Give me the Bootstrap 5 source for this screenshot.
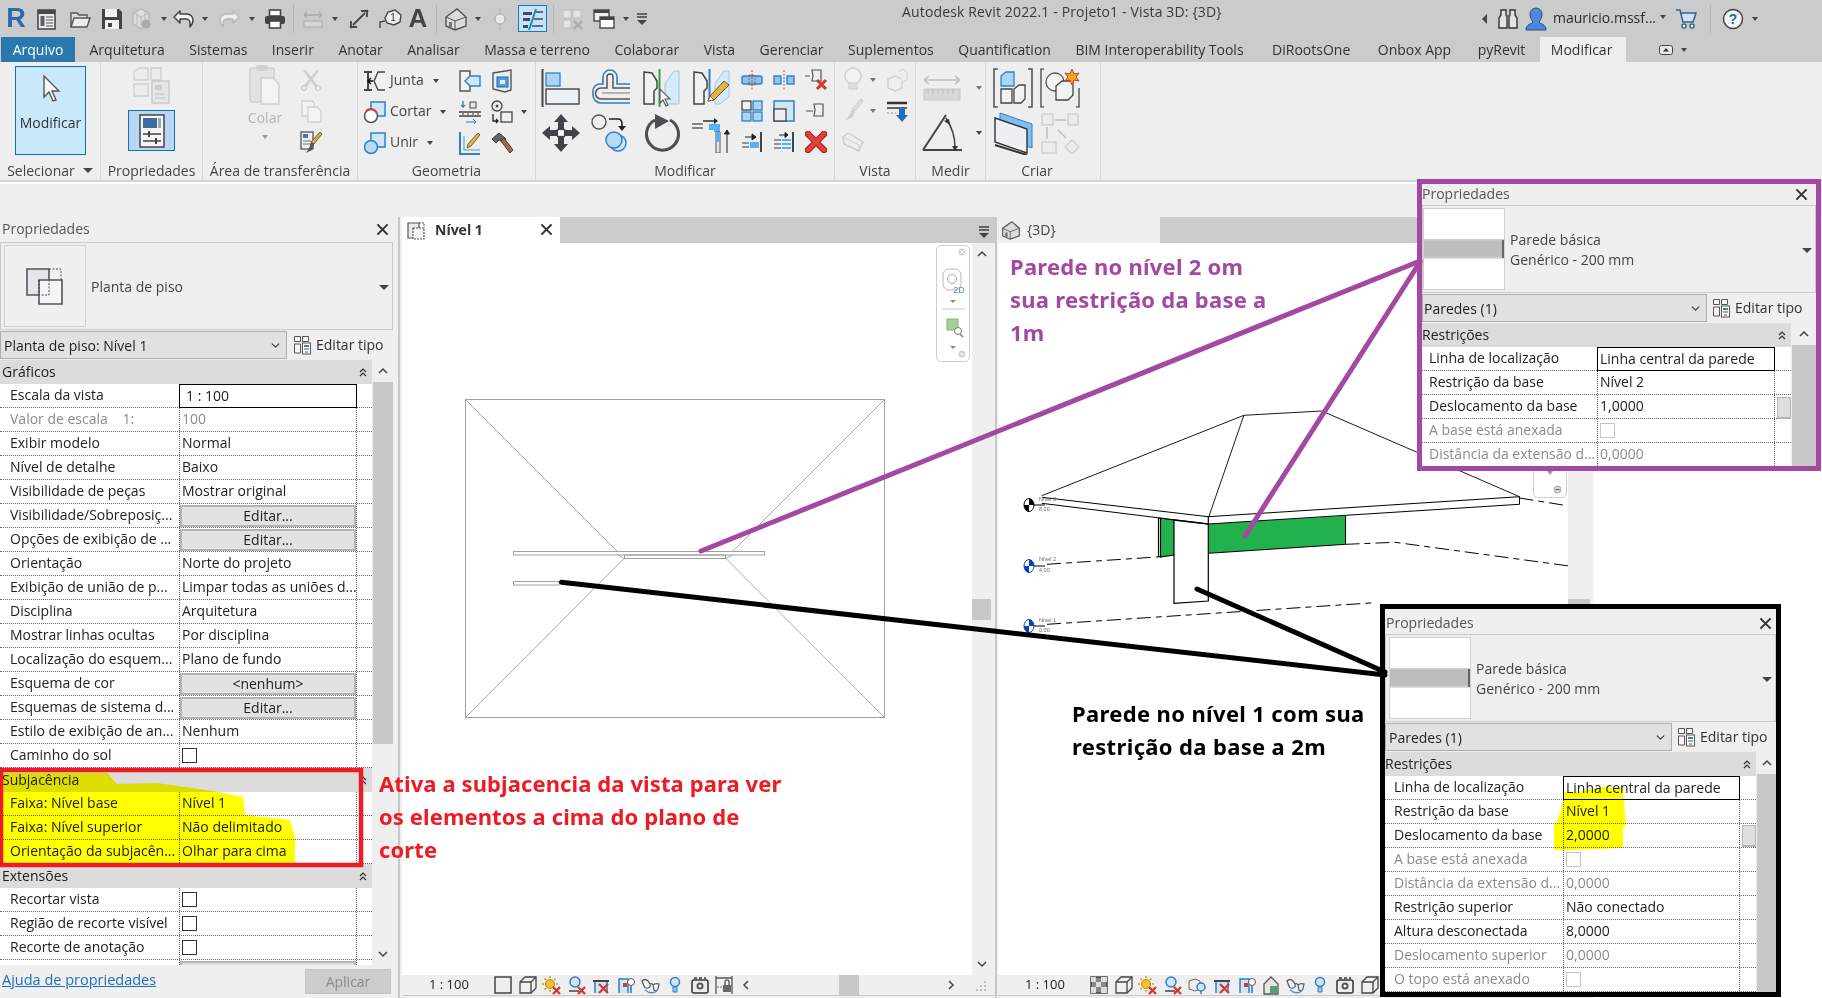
<!DOCTYPE html>
<html lang="pt-BR">
<head>
  <meta charset="UTF-8">
  <meta name="viewport" content="width=device-width, initial-scale=1.0">
  <title>Autodesk Revit 2022.1 - Projeto1 - Vista 3D: {3D}</title>
  <link href="https://cdn.jsdelivr.net/npm/bootstrap@5.3.0/dist/css/bootstrap.min.css" rel="stylesheet">
  <style>
    html, body { margin: 0; overflow: hidden; background: #fff; }
    body { font-family: "Open Sans", "Noto Sans", sans-serif; font-size: 14px; letter-spacing: 0; color: #2b2b2b; line-height: 1.2; }
    .app { width: 1822px; height: 998px; position: relative; overflow: hidden; background: #fff; }
    .sprites { position: absolute; width: 0; height: 0; }

    /* barra de titulo */
    .titlebar { height: 37px; background: #cbcbcb; gap: 6px; padding-left: 4px; }
    .logo-r { width: 24px; text-align: center; font: 700 27px "Liberation Sans", sans-serif; color: #2b6ca8; }
    .qa-a { width: 24px; text-align: center; font: 700 26px "Liberation Sans", sans-serif; color: #444; }
    .qa-sep { width: 1px; height: 28px; background: #b4b4b4; flex: none; }
    .qa-on { width: 29px; height: 27px; background: #c3e3f8; border: 1.5px solid #1b76cf; display: flex; align-items: center; justify-content: center; }
    .dd { display: inline-block; width: 0; height: 0; border-top: 4px solid #444; border-left: 3.5px solid transparent; border-right: 3.5px solid transparent; flex: none; }
    .dd-lg { border-top-width: 5px; border-left-width: 5px; border-right-width: 5px; }
    .dd-soft { border-top-color: #777; }
    .dd-faint { border-top-color: #999; }
    .dd-up { margin-top: -3px; }
    .dd-box { width: 8px; display: flex; justify-content: center; }
    .gp1 { margin-left: 1px; } .gp2 { margin-left: 2px; } .gp3 { margin-left: 3px; } .gp4 { margin-left: 4px; } .gp7 { margin-left: 7px; } .gp8 { margin-left: 8px; }
    .gn2 { margin-left: -2px; } .gn3 { margin-left: -3px; }
    .qa-title { margin-left: 248px; color: #3a3a3a; font-size: 14px; letter-spacing: .15px; margin-top: -12px; white-space: nowrap; }
    .qa-right { margin-left: auto; padding-right: 64px; gap: 4px; }
    .qa-name { white-space: nowrap; margin-left: 1px; }

    /* abas */
    .tabstrip { height: 25px; background: #cbcbcb; gap: 24.5px; padding-left: 1px; flex-wrap: nowrap; }
    .tabstrip .nav-link { padding: 0; color: #333; line-height: 25px; white-space: nowrap; }
    .tabstrip .tab-file { background: #2a79ae; color: #fff; width: 74px; text-align: center; margin-right: -10px; }
    .tabstrip .tab-on { background: #eee; padding: 0 11px; margin: 0 9px 0 -10px; width: 86px; }

    /* faixa de opcoes */
    .ribbon { height: 120px; background: #eee; border-bottom: 2px solid #d4d4d4; }
    .rb-panel { height: 118px; border-right: 1px solid #d9d9d9; flex: none; display: flex; flex-direction: column; }
    .rb-body { height: 98px; flex: none; position: relative; }
    .rb-label { text-align: center; color: #444; line-height: 21px; white-space: nowrap; }
    .rb-label-make { padding-right: 12px; }
    .rb-select { width: 101px; } .rb-props { width: 102px; } .rb-clip { width: 155px; } .rb-geo { width: 178px; }
    .rb-mod { width: 299px; } .rb-view { width: 81px; } .rb-meas { width: 70px; } .rb-make { width: 115px; }
    .mod-btn { width: 71px; height: 89px; margin: 4px 0 0 15px; background: #c9e8f9; border: 1.5px solid #0f6fc6; color: #333; padding-top: 8px; text-align: center; }
    .mod-btn svg { margin-bottom: 12px; }
    .prop-btn { width: 47px; height: 41px; background: #b9d6f2; border: 1.5px solid #0f6fc6; display: flex; align-items: center; justify-content: center; }
    .ic-cell { display: flex; align-items: center; justify-content: center; min-width: 0; }
    .clip-grid { display: grid; grid-template-columns: 60px 32px; grid-template-rows: repeat(3, 31px); margin: 2px 0 0 32px; }
    .clip-big { grid-row: 1 / 4; display: flex; flex-direction: column; align-items: center; color: #b4b4b4; }
    .clip-big span { margin-top: 4px; }
    .geo-grid { display: grid; grid-template-columns: 96px 32px 32px 12px; grid-template-rows: repeat(3, 31px); margin-top: 3px; }
    .geo-item { display: flex; align-items: center; gap: 3px; padding-left: 5px; color: #444; }
    .geo-item .dd { margin-left: 6px; }
    .mod-flex { display: flex; margin-top: 3px; }
    .mod-big { display: grid; grid-template-columns: repeat(4, 50px); grid-template-rows: repeat(2, 45px); }
    .mod-small { display: grid; grid-template-columns: repeat(3, 32px); grid-template-rows: repeat(3, 31px); margin-top: -1px; }
    .view-grid { display: grid; grid-template-columns: 3px 30px 10px 38px; grid-template-rows: repeat(3, 31px); margin-top: 2px; }
    .meas-grid { display: grid; grid-template-columns: 6px 40px 26px; grid-template-rows: repeat(2, 45px); margin-top: 3px; }
    .make-grid { display: grid; grid-template-columns: 3px 47px 47px; grid-template-rows: repeat(2, 45px); margin-top: 3px; }

    .workarea { height: 781px; display: flex; margin-top: 35px; background: #efefef; width: 1593px; position: relative; }
    .gapfill { position: absolute; left: 0; top: 184px; width: 1822px; height: 33px; background: #efefef; }

    /* painel de propriedades */
    .ppanel { display: flex; flex-direction: column; flex: none; background: #efefef; --c1: 179px; --c2: 178px; --t: 372px; width: 393px; height: 781px; overflow: hidden; }
    .ptitle { height: 25px; flex: none; display: flex; align-items: center; justify-content: space-between; color: #555; padding: 0 4px 0 2px; }
    .ptype { height: 88px; flex: none; border: 1px solid #cbcbcb; display: flex; align-items: center; padding-left: 3px; position: relative; color: #444; }
    .ptype-tx { margin-top: 3px; }
    .ptype-tx span { display: block; margin-top: 3px; }
    .pthumb { width: 82px; height: 82px; flex: none; border: 1px solid #d0d0d0; margin-right: 5px; background: #f0f0f0; display: flex; align-items: center; justify-content: center; }
    .pthumb-wall { background: linear-gradient(#666, #666) right 0 top 31px / 2px 18px no-repeat, linear-gradient(#fff 37%, #dcdcdc 37%, #bdbdbd 40%, #bdbdbd 59%, #dcdcdc 62%, #fff 62%); }
    .ptype .dd { position: absolute; right: 3px; top: 42px; }
    .pselect-row { height: 30px; flex: none; display: flex; align-items: center; }
    .pselect-row .form-select { width: 287px; height: 28px; padding: 0 20px 0 3px; border-radius: 0; border-color: #adadad; background-color: #e1e1e1; color: #222; font-size: 14px; background-size: 11px 9px; background-position: right 5px center; }
    .edit-type { display: flex; align-items: center; gap: 3px; margin-left: 6px; white-space: nowrap; color: #333; }
    .pgrid { flex: 1 1 auto; min-height: 0; display: flex; position: relative; overflow: hidden; }
    .ptable { width: var(--t); flex: none; background: #fff; }
    .pgroup { height: 24px; background: #dcdcdc; padding-left: 2px; display: flex; align-items: center; justify-content: space-between; padding-right: 5px; color: #222; }
    .prow { height: 24px; display: grid; grid-template-columns: var(--c1) var(--c2) 1fr; border-bottom: 1px dotted #666; color: #222; align-items: stretch; white-space: nowrap; }
    .prow > span { display: flex; align-items: center; overflow: hidden; }
    .prow > .pl { padding-left: 10px; }
    .prow > .pv { padding-left: 2px; border-left: 1px dotted #666; border-right: 1px dotted #666; }
    .prow.off { color: #8b8b8b; }
    .prow > .pv-input { border: 1.5px solid #000; background: #fff; margin-bottom: -1px; padding-left: 2px; }
    .prow > .pv-input.tx { padding-left: 6px; }
    .pv-btn { background: #e1e1e1; border: 2px solid #b2b2b2; flex: 1; text-align: center; line-height: 18px; margin: 1px 0 1px -2px; font-weight: 400; min-height: 22px; }
    .ck { width: 15px; height: 15px; border: 1px solid #333; background: #fff; }
    .off .ck { border-color: #c4c4c4; }
    .pscroll { flex: 1; margin-left: 1px; position: relative; background: #efefef; }
    .pscroll-track { position: absolute; left: 0; right: 0; top: 22px; background: #c8c8c8; }
    .trk-main { height: 362px; } .trk-p { height: 140px; } .trk-b { height: 220px; }
    .pscroll svg { position: absolute; left: 50%; margin-left: -6px; }
    .chev-t { top: 5px; } .chev-b { bottom: 5px; }
    .minithumb { position: absolute; width: 14px; height: 22px; background: #dedede; border: 1px solid #b5b5b5; border-bottom-width: 2px; }
    .mini-p { left: 355px; top: 74px; } .mini-b { left: 357px; top: 73px; }
    .pfoot { height: 33px; flex: none; display: flex; align-items: center; justify-content: space-between; padding: 0 2px; background: #efefef; }
    .pfoot a { color: #1a6fbf; font-size: 14.5px; margin-bottom: 4px; }
    .pfoot .btn { width: 86px; height: 25px; padding: 0; border-radius: 0; background: #ccc; border: 1px solid #c2c2c2; color: #8a8a8a; font-size: 14px; opacity: 1; }

    .float-props { position: absolute; z-index: 4; background: #efefef; }
    .float-purple { left: 1417px; top: 179px; width: 404px; height: 292px; border: 5px solid #a349a4; }
    .float-black { left: 1380px; top: 604px; width: 401px; height: 393px; border: 5px solid #000; }
    .float-props .ppanel { width: 100%; height: 100%; }
    .float-purple .ppanel { --c1: 175px; --c2: 178px; --t: 369px; }
    .float-purple .ptitle { height: 21px; padding: 0 8px 0 0; }
    .float-purple .ptype { padding-left: 0; }
    .float-purple .pselect-row .form-select { width: 285px; padding-left: 1px; }
    .float-purple .prow > .pl { padding-left: 7px; }
    .float-black .ppanel { --c1: 178px; --c2: 177px; --t: 371px; }
    .float-black .ptitle { padding: 3px 4px 0 1px; }
    .float-black .prow > .pl { padding-left: 9px; }
    .float-props .pgroup { padding-left: 0; }
    .float-props .edit-type { margin-left: 5px; }

    /* vistas */
    .vsplit { width: 7px; flex: none; position: relative; }
    .vsplit::after { content: ""; position: absolute; left: 5px; top: 0; bottom: 0; width: 2px; background: #c8c8c8; }
    .vsplit-b { width: 3px; }
    .vsplit-b::after { left: 0; }
    .vpane { display: flex; flex-direction: column; flex: none; }
    .vpane-a { width: 593px; margin-left: 2px; }
    .vpane-b { width: 595px; }
    .vtabs { height: 26px; background: #cbcbcb; display: flex; flex: none; align-items: stretch; position: relative; }
    .vtab { width: 158px; background: #fff; display: flex; align-items: center; font-weight: 700; color: #333; padding-left: 4px; gap: 9px; position: relative; }
    .vtab-close { position: absolute; right: 7px; top: 6px; }
    .vtab-off { background: #efefef; font-weight: 400; color: #444; width: 162px; padding-left: 3px; gap: 6px; }
    .vtabs-more { position: absolute; right: 5px; top: 8px; }
    .vbody { height: 732px; flex: none; display: flex; position: relative; }
    .vcanvas { width: 570px; background: #fff; flex: none; display: block; }
    .vscroll { width: 19px; background: #efefef; flex: none; position: relative; }
    .vscroll-wide { width: 22px; }
    .vscroll i { position: absolute; left: 0; right: 0; top: 356px; height: 21px; background: #c8c8c8; }
    .vscroll svg { position: absolute; left: 4px; }
    .vbar { height: 20px; display: flex; align-items: center; flex: none; background: #efefef; }
    .vbar-scale { width: 91px; padding-left: 27px; font-size: 13px; flex: none; color: #222; }
    .vbar-icons { display: flex; gap: 4.6px; flex: none; }
    .vbar-track { position: relative; flex: 1; height: 20px; margin-left: 6px; }
    .vbar-track i { position: absolute; left: 99px; width: 20px; top: 0; bottom: 0; background: #c8c8c8; }
    .vbar-track svg { position: absolute; top: 4px; }
    .trk-l { left: 0; } .trk-r { left: 205px; }
    .vbar-line { height: 3px; border-top: 1.5px solid #c8c8c8; background: #efefef; flex: none; }
    .wheel { position: absolute; left: 534px; top: 2px; width: 34px; height: 117px; border: 1.5px solid #cfcfcf; border-radius: 5px; background: #fff; display: flex; flex-direction: column; align-items: center; }
    .wheel-b { left: 535px; top: 138px; height: 117px; justify-content: flex-end; padding-bottom: 3px; gap: 10px; }

    /* anotacoes */
    .overlay, .hl-layer { position: absolute; left: 0; top: 0; width: 1822px; height: 998px; pointer-events: none; }
    .hl-layer { z-index: 5; mix-blend-mode: multiply; }
    .overlay { z-index: 6; }
    .note { position: absolute; z-index: 7; font-family: "Noto Sans", "Open Sans", sans-serif; font-weight: 700; font-size: 22px; line-height: 33px; margin: 0; white-space: nowrap; }
    .note-red { left: 379px; top: 767px; color: #ed1c24; letter-spacing: .1px; }
    .note-purple { left: 1010px; top: 250px; color: #a349a4; letter-spacing: .25px; }
    .note-black { left: 1072px; top: 697px; color: #000; letter-spacing: .35px; }
  </style>
</head>
<body>
<div class="app">

  <!-- icones reutilizados -->
  <svg class="sprites" aria-hidden="true">
    <symbol id="q-list" viewBox="0 0 24 24"><rect x="4" y="3" width="17" height="19" fill="#e9eaeb" stroke="#4a4a4a" stroke-width="1.6"/><rect x="4" y="3" width="17" height="4" fill="#4a4a4a"/><rect x="6.5" y="9" width="4" height="10" fill="#5a6066"/><path d="M12 10h7M12 13h7M12 16h7M12 19h7" stroke="#555"/></symbol>
    <symbol id="q-open" viewBox="0 0 24 24"><path d="M3 20V6h6l2 2h8v3" fill="#ddd" stroke="#555" stroke-width="1.4"/><path d="M3 20l3-9h16l-3 9z" fill="#ececec" stroke="#555" stroke-width="1.4"/></symbol>
    <symbol id="q-save" viewBox="0 0 24 24"><path d="M2 2h17l3 3v17H2z" fill="#444"/><rect x="5" y="2" width="12" height="8" fill="#f2f2f2"/><rect x="5" y="13" width="14" height="9" fill="#f2f2f2"/><rect x="8" y="16" width="4" height="4" fill="#444"/></symbol>
    <symbol id="q-cube" viewBox="0 0 24 24"><path d="M11 2l8 4v11l-8 5-8-5V6z" fill="#ddd" stroke="#b5b5b5" stroke-width="1.3"/><path d="M3 6l8 4 8-4M11 10v12M7 4v14M15 4v14" stroke="#bbb" fill="none"/><circle cx="16" cy="17" r="4.500" fill="#aaa"/></symbol>
    <symbol id="q-undo" viewBox="0 0 24 24"><path d="M9 4L3 10l6 6V12h6a4 4 0 0 1 4 4v4q3-3 3-7a6 6 0 0 0-6-6H9z" fill="#f4f4f4" stroke="#444" stroke-width="1.5" stroke-linejoin="round"/></symbol>
    <symbol id="q-redo" viewBox="0 0 24 24"><path d="M15 4l6 6-6 6V12H9a4 4 0 0 0-4 4v4q-3-3-3-7a6 6 0 0 1 6-6h7z" fill="#eee" stroke="#b9b9b9" stroke-width="1.5" stroke-linejoin="round"/></symbol>
    <symbol id="q-print" viewBox="0 0 24 24"><rect x="6.5" y="3" width="11" height="6" fill="#fff" stroke="#444" stroke-width="1.6"/><rect x="2" y="9" width="20" height="8" rx="2" fill="#444"/><rect x="6.5" y="14" width="11" height="7" fill="#fff" stroke="#444" stroke-width="1.6"/></symbol>
    <symbol id="q-meas" viewBox="0 0 24 24"><path d="M3 8h18M3 8l3-3M3 8l3 3M21 8l-3-3M21 8l-3 3" stroke="#aaa" stroke-width="1.4" fill="none"/><rect x="3" y="14" width="18" height="6" fill="#d5d5d5" stroke="#aaa"/></symbol>
    <symbol id="q-dim" viewBox="0 0 24 24"><path d="M6 18L18 6M14 4h6v6M4 14v6h6" stroke="#444" stroke-width="1.8" fill="none"/><path d="M3 19l2 2M19 3l2 2" stroke="#444" stroke-width="2"/></symbol>
    <symbol id="q-house" viewBox="0 0 24 24"><path d="M2 10L13 2l9 8v9l-11 4-9-4z" fill="#dcdcdc" stroke="#555" stroke-width="1.4"/><path d="M2 10l9 4 11-4M11 14v9" stroke="#555" fill="none"/><rect x="5" y="15" width="3" height="5" fill="#777"/></symbol>
    <symbol id="q-circ" viewBox="0 0 24 24"><path d="M12 1v4M12 19v4" stroke="#bbb" stroke-width="1.5"/><path d="M12 5l7 7-7 7-7-7z" fill="#bbb"/><circle cx="12" cy="12" r="5" fill="#eaeaea" stroke="#aaa"/></symbol>
    <symbol id="q-thin" viewBox="0 0 24 24"><path d="M2 5h9v3H2zM2 11h7v3H2zM2 18h5v3H2z" fill="#3f4a55"/><path d="M15 5h7M13 12h9M11 19h11" stroke="#3f4a55" stroke-width="1.4"/><path d="M15 2L8 23" stroke="#1b76cf" stroke-width="1.8"/></symbol>
    <symbol id="q-sw" viewBox="0 0 24 24"><path d="M3 3h8v8H3zM13 3h8v8h-8zM3 13h8v8H3z" fill="#e4e4e4" stroke="#bbb"/><path d="M14 14l8 8M22 14l-8 8" stroke="#aaa" stroke-width="2.400"/></symbol>
    <symbol id="q-win" viewBox="0 0 24 24"><rect x="2" y="3" width="15" height="11" fill="#eee" stroke="#444" stroke-width="1.4"/><rect x="2" y="3" width="15" height="3" fill="#444"/><rect x="8" y="10" width="14" height="11" fill="#fff" stroke="#444" stroke-width="1.4"/><rect x="8" y="10" width="14" height="3" fill="#444"/></symbol>
    <symbol id="edit-ty" viewBox="0 0 20 20"><path d="M1.500 1.500h6v5h-6zM9.500 1.500h6v5h-6zM1.500 9h6v9h-6z" fill="#f6f6f6" stroke="#555"/><rect x="9.500" y="8" width="8" height="11" fill="#fff" stroke="#555"/><path d="M11 10h5v2h-5z" fill="#2f7fc9"/><path d="M11 14h5M12 17h3" stroke="#555"/></symbol>
    <symbol id="x-close" viewBox="0 0 14 14"><path d="M1.500 1.500l11 11M12.500 1.500l-11 11" stroke="#333" stroke-width="2.200"/></symbol>
    <symbol id="chev-up" viewBox="0 0 12 12"><path d="M2 8l4-4 4 4" fill="none" stroke="#444" stroke-width="1.500"/></symbol>
    <symbol id="chev-dn" viewBox="0 0 12 12"><path d="M2 4l4 4 4-4" fill="none" stroke="#444" stroke-width="1.500"/></symbol>
    <symbol id="dbl-up" viewBox="0 0 8 10"><path d="M1 5l3-3 3 3M1 9l3-3 3 3" fill="none" stroke="#333" stroke-width="1.200"/></symbol>
    <symbol id="more" viewBox="0 0 12 14"><path d="M1 2h10M1 5h10" stroke="#444" stroke-width="1.500"/><path d="M1 8h10l-5 5z" fill="#444"/></symbol>

    <!-- barra de controle da vista -->
    <symbol id="v-rect" viewBox="0 0 20 20"><rect x="2" y="2" width="16" height="16" fill="#eee" stroke="#444" stroke-width="1.500"/></symbol>
    <symbol id="v-chk" viewBox="0 0 20 20"><rect x="2" y="2" width="16" height="16" fill="#888" stroke="#444" stroke-width="1.500"/><path d="M2 2h5v5H2zM12 2h6v5h-6zM7 7h5v5H7zM2 12h5v6H2zM12 12h6v6h-6z" fill="#ddd"/></symbol>
    <symbol id="v-cube" viewBox="0 0 20 20"><path d="M2 7l5-5h11v11l-5 5H2z" fill="#f1f1f1" stroke="#444" stroke-width="1.300"/><path d="M2 7h11v11M13 7l5-5" fill="none" stroke="#444" stroke-width="1.300"/></symbol>
    <symbol id="v-sun" viewBox="0 0 20 20"><circle cx="8" cy="9" r="4.500" fill="#f2c230" stroke="#b88b10"/><path d="M8 1v2M8 15v2M0 9h2M14 9h2M2.500 3.500l1.500 1.500M13.500 3.500L12 5M2.500 14.500L4 13" stroke="#c99d1a" stroke-width="1.400"/><path d="M11 12l7 7M18 12l-7 7" stroke="#d5392c" stroke-width="2.400"/></symbol>
    <symbol id="v-look" viewBox="0 0 20 20"><circle cx="8" cy="7" r="5" fill="#cfe6f7" stroke="#2f7fc9" stroke-width="1.500"/><path d="M2 16h10" stroke="#444" stroke-width="1.500"/><path d="M11 12l7 7M18 12l-7 7" stroke="#d5392c" stroke-width="2.400"/></symbol>
    <symbol id="v-crop" viewBox="0 0 20 20"><path d="M4 18V6h12v12" fill="#cfe6f7" stroke="#2f7fc9" stroke-width="1.500"/><path d="M2 6h16" stroke="#444" stroke-width="2"/><path d="M8 9l9 9M17 9l-9 9" stroke="#d5392c" stroke-width="2.200"/></symbol>
    <symbol id="v-cropl" viewBox="0 0 20 20"><path d="M3 18V4h9v14" fill="#cfe6f7" stroke="#2f7fc9" stroke-width="1.500"/><path d="M7 8h4v4H7z" fill="#d5392c"/><circle cx="15" cy="7" r="3.500" fill="#fff" stroke="#555"/><path d="M14 11v7h2v-7" fill="#4b94d4"/></symbol>
    <symbol id="v-glass" viewBox="0 0 20 20"><path d="M1 6q3-3 6 0l2 3q1 3-2 4t-4-2zM9 9q2-1 3 1" fill="#eef3f7" stroke="#555" stroke-width="1.200"/><path d="M12 10q2-2 6-1l-1 5q-2 3-4 1z" fill="#eef3f7" stroke="#555" stroke-width="1.200"/><path d="M4 15q6 5 12 1" fill="none" stroke="#4b94d4" stroke-width="1.500"/></symbol>
    <symbol id="v-bulb" viewBox="0 0 20 20"><circle cx="10" cy="7" r="4.500" fill="#cfe6f7" stroke="#2f7fc9" stroke-width="1.500"/><path d="M8 12h4v5H8z" fill="#9cc6e8" stroke="#2f7fc9"/></symbol>
    <symbol id="v-cam" viewBox="0 0 20 20"><rect x="2" y="5" width="16" height="13" rx="2" fill="#eee" stroke="#333" stroke-width="1.500"/><path d="M4 3h3M9 3h3M14 3h2" stroke="#333" stroke-width="1.500"/><circle cx="10" cy="11" r="3.500" fill="#555"/><circle cx="10" cy="11" r="1.500" fill="#fff"/></symbol>
    <symbol id="v-lock" viewBox="0 0 20 20"><path d="M2 1v18M18 1v18M2 3h16" stroke="#555" fill="none" stroke-width="1.300"/><path d="M3 12h5" stroke="#777" stroke-dasharray="2 1"/><rect x="9" y="10" width="8" height="7" fill="#666"/><path d="M11 10V7a2 2 0 0 1 4 0v3" fill="none" stroke="#666" stroke-width="1.500"/></symbol>
    <symbol id="v-hood" viewBox="0 0 20 20"><path d="M3 9l7-7 7 7v10H3z" fill="#e6e6e6" stroke="#555" stroke-width="1.300"/><rect x="9" y="11" width="8" height="7" fill="#54a07a"/></symbol>
    <symbol id="v-teapot" viewBox="0 0 20 20"><path d="M2 6l6-2 5 2v8l-5 2-6-2z" fill="#eee" stroke="#666"/><circle cx="14" cy="12" r="4" fill="#cfe6f7" stroke="#2f7fc9" stroke-width="1.500"/><path d="M14 16v3" stroke="#2f7fc9" stroke-width="1.500"/></symbol>
  </svg>

  <!-- barra de titulo -->
  <div class="titlebar d-flex align-items-center">
    <span class="logo-r">R</span>
    <svg width="24" height="24"><use href="#q-list"/></svg>
    <svg width="24" height="24" class="gp4"><use href="#q-open"/></svg>
    <svg width="24" height="24" class="gp2"><use href="#q-save"/></svg>
    <svg width="24" height="24"><use href="#q-cube"/></svg>
    <span class="dd-box"><i class="dd"></i></span>
    <svg width="24" height="24" class="gn3"><use href="#q-undo"/></svg>
    <span class="dd-box"><i class="dd"></i></span>
    <svg width="24" height="24" class="gp3"><use href="#q-redo"/></svg>
    <span class="dd-box"><i class="dd"></i></span>
    <svg width="24" height="24" class="gp1"><use href="#q-print"/></svg>
    <span class="qa-sep"></span>
    <svg width="24" height="24" class="gp1"><use href="#q-meas"/></svg>
    <span class="dd-box"><i class="dd"></i></span>
    <svg width="24" height="24" class="gp2"><use href="#q-dim"/></svg>
    <svg width="24" height="24" viewBox="0 0 24 24" class="gp1"><path d="M2 21v-6l5-1" stroke="#444" stroke-width="1.400" fill="none"/><path d="M7 11l3-6 7-2 6 5-1 7-6 3-7-2z" fill="#eee" stroke="#444" stroke-width="1.400"/><text x="15" y="14" font-size="10" text-anchor="middle" fill="#333" font-family="Liberation Sans">1</text></svg>
    <span class="qa-a gn2">A</span>
    <span class="qa-sep"></span>
    <svg width="24" height="24" class="gp1"><use href="#q-house"/></svg>
    <span class="dd-box"><i class="dd"></i></span>
    <svg width="24" height="24"><use href="#q-circ"/></svg>
    <span class="qa-on"><svg width="24" height="24"><use href="#q-thin"/></svg></span>
    <span class="qa-sep"></span>
    <svg width="24" height="24"><use href="#q-sw"/></svg>
    <svg width="24" height="24" class="gp2"><use href="#q-win"/></svg>
    <span class="dd-box"><i class="dd"></i></span>
    <svg width="12" height="14"><use href="#more"/></svg>
    <span class="qa-title">Autodesk Revit 2022.1 - Projeto1 - Vista 3D: {3D}</span>
    <div class="qa-right d-flex align-items-center">
      <svg width="6" height="10" viewBox="0 0 6 10"><path d="M5 0v10L0 5z" fill="#444"/></svg>
      <svg width="24" height="24" viewBox="0 0 24 24" class="gp4"><path d="M5 3h5v5l1 3v10H3V11l2-3zM14 3h5v5l2 3v10h-8V11l1-3z" fill="#e4e4e4" stroke="#333" stroke-width="1.400"/><path d="M10 8h4v6h-4z" fill="#666"/></svg>
      <svg width="24" height="24" viewBox="0 0 24 24"><path d="M2 23c0-6 6-6 7-8-2-2-3-5-3-8a6 6 0 0 1 12 0c0 3-1 6-3 8 1 2 7 2 7 8z" fill="#4f86d6" stroke="#23508f"/></svg>
      <span class="qa-name">mauricio.mssf...</span>
      <i class="dd dd-up"></i>
      <svg width="24" height="24" viewBox="0 0 24 24" class="gp4"><path d="M2 3h4l3 12h10l3-9H7" fill="#cfe3f5" stroke="#345f8e" stroke-width="1.500"/><circle cx="10" cy="19" r="2" fill="#fff" stroke="#345f8e" stroke-width="1.400"/><circle cx="18" cy="19" r="2" fill="#fff" stroke="#345f8e" stroke-width="1.400"/></svg>
      <span class="qa-sep gp8"></span>
      <svg width="22" height="22" viewBox="0 0 22 22" class="gp7"><circle cx="11" cy="11" r="9.500" fill="#f4f4f4" stroke="#444" stroke-width="1.500"/><text x="11" y="16" text-anchor="middle" font-size="14" font-weight="700" fill="#1f5fb5" font-family="Liberation Sans">?</text></svg>
      <i class="dd gp4"></i>
    </div>
  </div>

  <!-- abas -->
  <nav class="nav tabstrip">
    <a class="nav-link tab-file" href="#">Arquivo</a>
    <a class="nav-link" href="#">Arquitetura</a>
    <a class="nav-link" href="#">Sistemas</a>
    <a class="nav-link" href="#">Inserir</a>
    <a class="nav-link" href="#">Anotar</a>
    <a class="nav-link" href="#">Analisar</a>
    <a class="nav-link" href="#">Massa e terreno</a>
    <a class="nav-link" href="#">Colaborar</a>
    <a class="nav-link" href="#">Vista</a>
    <a class="nav-link" href="#">Gerenciar</a>
    <a class="nav-link" href="#">Suplementos</a>
    <a class="nav-link" href="#">Quantification</a>
    <a class="nav-link" href="#">BIM Interoperability Tools</a>
    <a class="nav-link gp4" href="#">DiRootsOne</a>
    <a class="nav-link gp3" href="#">Onbox App</a>
    <a class="nav-link gp2" href="#">pyRevit</a>
    <a class="nav-link tab-on" href="#">Modificar</a>
    <span class="d-flex align-items-center gap-2">
      <svg width="14" height="10" viewBox="0 0 14 10"><rect x=".5" y=".5" width="13" height="9" rx="2" fill="#e8e8e8" stroke="#444"/><path d="M4 6.500h6L7 3z" fill="#333"/></svg>
      <i class="dd"></i>
    </span>
  </nav>

  <!-- faixa de opcoes -->
  <div class="ribbon d-flex">
    <section class="rb-panel rb-select">
      <div class="rb-body">
        <div class="mod-btn">
          <svg width="26" height="28" viewBox="0 0 26 28" class="d-block mx-auto"><path d="M6 1v21l5-5 4 9 3-1-4-9h7z" fill="#f6f6f6" stroke="#555" stroke-width="1.400"/></svg>
          Modificar
        </div>
      </div>
      <div class="rb-label d-flex align-items-center justify-content-center gap-2">Selecionar <i class="dd dd-lg"></i></div>
    </section>

    <section class="rb-panel rb-props">
      <div class="rb-body d-flex flex-column align-items-center">
        <svg width="42" height="40" viewBox="0 0 42 40" class="mt-1 mb-1"><path d="M3 5l6-3h8v12H3zM3 18h14v12H3zM20 2h10v12H20z" fill="#ececec" stroke="#cecece" stroke-width="1.300"/><rect x="21" y="15" width="17" height="22" fill="#e6e6e6" stroke="#c6c6c6" stroke-width="1.300"/><rect x="24" y="19" width="7" height="5" fill="#cfcfcf"/><path d="M24 28h10M24 32h10" stroke="#cdcdcd" stroke-width="1.300"/></svg>
        <div class="prop-btn">
          <svg width="26" height="34" viewBox="0 0 26 34"><rect x="1" y="1" width="24" height="32" fill="#f4f6f8" stroke="#444" stroke-width="1.500"/><rect x="4" y="4" width="14" height="10" fill="#3d6ca3"/><rect x="19" y="4" width="3" height="10" fill="#9fa9b3"/><path d="M4 20h18M4 27h18" stroke="#444" stroke-width="1.500"/><path d="M10 17v6M17 24v6" stroke="#444" stroke-width="2"/></svg>
        </div>
      </div>
      <div class="rb-label">Propriedades</div>
    </section>

    <section class="rb-panel rb-clip">
      <div class="rb-body">
        <div class="clip-grid">
          <div class="clip-big">
            <svg width="34" height="42" viewBox="0 0 34 42"><rect x="2" y="4" width="24" height="34" rx="2" fill="#e3e3e3" stroke="#cfcfcf" stroke-width="1.500"/><rect x="8" y="1" width="12" height="6" rx="2" fill="#d2d2d2"/><path d="M13 14h12l6 6v20H13z" fill="#f3f3f3" stroke="#cfcfcf" stroke-width="1.500"/></svg>
            <span>Colar</span>
            <i class="dd mt-2 dd-faint"></i>
          </div>
          <span class="ic-cell"><svg width="22" height="24" viewBox="0 0 22 24"><path d="M4 2l14 18M18 2L4 20" stroke="#cfcfcf" stroke-width="2.600"/><circle cx="4" cy="20" r="2.500" fill="#eee" stroke="#c6c6c6"/><circle cx="18" cy="20" r="2.500" fill="#eee" stroke="#c6c6c6"/></svg></span>
          <span class="ic-cell"><svg width="22" height="24" viewBox="0 0 22 24"><path d="M2 2h10l2 2v13H2z" fill="#f3f3f3" stroke="#d0d0d0" stroke-width="1.300"/><path d="M8 8h9l4 4v11H8z" fill="#f3f3f3" stroke="#d0d0d0" stroke-width="1.300"/></svg></span>
          <span class="ic-cell"><svg width="24" height="24" viewBox="0 0 24 24"><rect x="2" y="2" width="12" height="17" fill="#eef1f4" stroke="#555" stroke-width="1.300"/><rect x="4" y="4" width="5" height="4" fill="#4a78ad"/><path d="M4 11h8M4 14h8" stroke="#777"/><path d="M21 2l2 2-8 10-3-2z" fill="#d4aa52" stroke="#7d6330"/><path d="M12 12l3 2-2 6-6 3q4-5 5-11z" fill="#555"/></svg></span>
        </div>
      </div>
      <div class="rb-label">Área de transferência</div>
    </section>

    <section class="rb-panel rb-geo">
      <div class="rb-body">
        <div class="geo-grid">
          <div class="geo-item"><svg width="24" height="24" viewBox="0 0 24 24"><path d="M1 3h8M1 21h8M5 3v18" stroke="#444" stroke-width="2"/><path d="M22 3h-7l-4 9 4 9h7" fill="#eef2f5" stroke="#444" stroke-width="1.400"/><path d="M10 12h-5M8 9l-3 3 3 3" fill="none" stroke="#111" stroke-width="1.300"/></svg> Junta <i class="dd"></i></div>
          <span class="ic-cell"><svg width="24" height="24" viewBox="0 0 24 24"><path d="M2 2h10v20H2z" fill="#f2f3f4" stroke="#555" stroke-width="1.400"/><path d="M22 7H12l-5 5 5 5h10z" fill="#cfe6f7" stroke="#2f7fc9" stroke-width="1.400"/></svg></span>
          <span class="ic-cell"><svg width="24" height="24" viewBox="0 0 24 24"><path d="M3 4l18-3v20l-6 2-12-3z" fill="#e8edf1" stroke="#555" stroke-width="1.400"/><rect x="7" y="8" width="11" height="10" fill="#4f9fdd" stroke="#1f66a8"/><rect x="10" y="11" width="5" height="4" fill="#e8edf1"/></svg></span>
          <span></span>
          <div class="geo-item"><svg width="24" height="24" viewBox="0 0 24 24"><rect x="8" y="2" width="14" height="14" fill="#cfe6f7" stroke="#2f7fc9" stroke-width="1.500"/><circle cx="8" cy="16" r="6.500" fill="#fff" stroke="#555" stroke-width="1.500"/><path d="M3 11a6.500 6.500 0 0 1 11 3" fill="none" stroke="#e53c30" stroke-width="1.800"/></svg> Cortar <i class="dd"></i></div>
          <span class="ic-cell"><svg width="24" height="24" viewBox="0 0 24 24"><path d="M5 1v6M3 5l2 2 2-2" stroke="#2f7fc9" fill="none" stroke-width="1.300"/><rect x="12" y="2" width="6" height="6" fill="#e8e8e8" stroke="#444"/><path d="M1 12h22M1 16h22" stroke="#444" stroke-width="1.400"/><path d="M4 14h2M9 14h2M14 14h2M19 14h2" stroke="#444"/><path d="M8 22h10M15 19l3 3-3 3" stroke="#2f7fc9" fill="none"/></svg></span>
          <span class="ic-cell"><svg width="24" height="24" viewBox="0 0 24 24"><circle cx="7" cy="6" r="5" fill="#eee" stroke="#444" stroke-width="1.300"/><circle cx="7" cy="6" r="1.500" fill="#444"/><rect x="11" y="12" width="11" height="10" fill="#eef1f4" stroke="#444" stroke-width="1.300"/><path d="M3 14v7h5M6 19l2 2-2 2" fill="none" stroke="#222" stroke-width="1.300"/></svg></span>
          <span class="ic-cell"><i class="dd"></i></span>
          <div class="geo-item"><svg width="24" height="24" viewBox="0 0 24 24"><rect x="8" y="2" width="14" height="14" fill="#cfe6f7" stroke="#2f7fc9" stroke-width="1.500"/><circle cx="8" cy="16" r="6.500" fill="#b7d9f1" stroke="#2f7fc9" stroke-width="1.500"/></svg> Unir <i class="dd"></i></div>
          <span class="ic-cell"><svg width="24" height="24" viewBox="0 0 24 24"><path d="M2 1v22h20" fill="none" stroke="#2f7fc9" stroke-width="2"/><path d="M6 5v14h16" fill="none" stroke="#7fb6e3" stroke-width="1.500"/><path d="M22 4l-9 11-4 2 1-4 10-11z" fill="#e5b34a" stroke="#7b5d24"/></svg></span>
          <span class="ic-cell"><svg width="24" height="24" viewBox="0 0 24 24"><path d="M2 8l7-6 7 6-3 3-4-2-3 3z" fill="#666" stroke="#333"/><path d="M11 10l3-3 9 12-3 3z" fill="#a5684a" stroke="#5c3422"/></svg></span>
          <span></span>
        </div>
      </div>
      <div class="rb-label">Geometria</div>
    </section>

    <section class="rb-panel rb-mod">
      <div class="rb-body">
        <div class="mod-flex">
          <div class="mod-big">
            <span class="ic-cell"><svg width="40" height="40" viewBox="0 0 40 40"><path d="M1.500 1v38" stroke="#444" stroke-width="2"/><rect x="5" y="5" width="14" height="13" fill="#a9d6f2" stroke="#2f7fc9" stroke-width="1.300"/><rect x="5" y="21" width="33" height="15" fill="#eef1f3" stroke="#444" stroke-width="1.400"/></svg></span>
            <span class="ic-cell"><svg width="40" height="40" viewBox="0 0 40 40"><path d="M39 16H26V9a7 7 0 0 0-14 0v7H9a7 7 0 0 0-7 7v4a8 8 0 0 0 8 8h29" fill="none" stroke="#2f7fc9" stroke-width="1.600"/><path d="M39 20H22V9a3 3 0 0 0-6 0v11H10a4 4 0 0 0 0 11h29" fill="none" stroke="#555" stroke-width="1.500"/><path d="M39 25H11" stroke="#777"/></svg></span>
            <span class="ic-cell"><svg width="40" height="40" viewBox="0 0 40 40"><path d="M3 4l8 1 5 8v7l-3 3v13H3z" fill="#f1f2f3" stroke="#444" stroke-width="1.500"/><path d="M24 16l9-13h5v33H24z" fill="#d6ebf8" stroke="#9cc5e2"/><path d="M18.500 1v38" stroke="#36a336" stroke-width="2"/><path d="M19 21v14l3-3 3 6 2-1-3-6h5z" fill="#fff" stroke="#555" stroke-width="1.100"/></svg></span>
            <span class="ic-cell"><svg width="40" height="40" viewBox="0 0 40 40"><path d="M3 4l8 1 5 8v7l-3 3v13H3z" fill="#f1f2f3" stroke="#444" stroke-width="1.500"/><path d="M24 16l9-13h5v26l-9 7h-5z" fill="#d6ebf8" stroke="#9cc5e2"/><path d="M18.500 1v32" stroke="#2f7fc9" stroke-width="2"/><path d="M17 33l2-5 14-15 5 4-15 15z" fill="#e5b34a" stroke="#6f5420"/><path d="M17 33l2-5 4 4z" fill="#fff" stroke="#6f5420" stroke-width=".8"/></svg></span>
            <span class="ic-cell"><svg width="40" height="40" viewBox="0 0 40 40"><path d="M20 1l7 8h-4v7h-6V9h-4zM20 39l7-8h-4v-7h-6v7h-4zM1 20l8-7v4h7v6H9v4zM39 20l-8-7v4h-7v6h7v4z" fill="#3f444a"/><rect x="16.500" y="16.500" width="7" height="7" fill="#fff" stroke="#3f444a" stroke-width="1.300"/></svg></span>
            <span class="ic-cell"><svg width="40" height="40" viewBox="0 0 40 40"><circle cx="8" cy="9" r="7" fill="#f0f0f0" stroke="#555" stroke-width="1.400"/><path d="M18 6h9q4 0 4 5v3" fill="none" stroke="#222" stroke-width="1.600"/><path d="M27 13h8l-4 5z" fill="#222"/><circle cx="27" cy="30" r="8" fill="#cfe6f7" stroke="#2f7fc9" stroke-width="1.500"/><circle cx="23" cy="27" r="8" fill="#b7d9f1" stroke="#2f7fc9" stroke-width="1.500"/></svg></span>
            <span class="ic-cell"><svg width="40" height="40" viewBox="0 0 40 40"><path d="M14 7A16 16 0 1 0 29 7" fill="none" stroke="#4a4f54" stroke-width="3"/><path d="M14 1l14 7-14 8z" fill="#4a4f54"/></svg></span>
            <span class="ic-cell"><svg width="40" height="40" viewBox="0 0 40 40"><path d="M1 11h11M1 15h11" stroke="#666" stroke-width="1.500"/><path d="M12 8h13" stroke="#222" stroke-width="1.400"/><path d="M23 5l4 3-4 3z" fill="#222"/><path d="M18 11h11v8h-6v-2h-5z" fill="#5bb1ee"/><path d="M25 19h4v21h-4z" fill="#e5e5e5" stroke="#555"/><path d="M25 19h4v10h-4z" fill="#5bb1ee"/><path d="M36 40V18M33.500 21l2.500-4 2.500 4z" fill="#222" stroke="#222"/></svg></span>
          </div>
          <div class="mod-small">
            <span class="ic-cell"><svg width="22" height="22" viewBox="0 0 22 22"><rect x="1" y="7" width="20" height="8" rx="1.500" fill="#8cc4ee" stroke="#2f7fc9" stroke-width="1.400"/><path d="M11 1v20" stroke="#d5392c" stroke-dasharray="2 1.500"/><rect x="8" y="6" width="6" height="10" fill="none" stroke="#d5392c" stroke-width=".8" stroke-dasharray="2 1"/></svg></span>
            <span class="ic-cell"><svg width="22" height="22" viewBox="0 0 22 22"><rect x="1" y="7" width="7" height="8" fill="#8cc4ee" stroke="#2f7fc9" stroke-width="1.400"/><rect x="14" y="7" width="7" height="8" fill="#8cc4ee" stroke="#2f7fc9" stroke-width="1.400"/><path d="M11 1v20" stroke="#d5392c" stroke-dasharray="2 1.500"/></svg></span>
            <span class="ic-cell"><svg width="24" height="24" viewBox="0 0 24 24"><path d="M1 8h5M8 2l9 0v11H8l1-5z" fill="#eee" stroke="#555" stroke-width="1.200"/><path d="M13 12l9 9M22 12l-9 9" stroke="#d5392c" stroke-width="3"/></svg></span>
            <span class="ic-cell"><svg width="22" height="22" viewBox="0 0 22 22"><rect x="1" y="1" width="9" height="9" fill="#eef1f3" stroke="#444" stroke-width="1.300"/><rect x="12" y="1" width="9" height="9" fill="#a9d6f2" stroke="#2f7fc9" stroke-width="1.300"/><rect x="1" y="12" width="9" height="9" fill="#a9d6f2" stroke="#2f7fc9" stroke-width="1.300"/><rect x="12" y="12" width="9" height="9" fill="#a9d6f2" stroke="#2f7fc9" stroke-width="1.300"/></svg></span>
            <span class="ic-cell"><svg width="22" height="22" viewBox="0 0 22 22"><path d="M1 1h20v20H1z" fill="#cfe6f7" stroke="#2f7fc9" stroke-width="1.500"/><rect x="1" y="9" width="12" height="12" fill="#eef1f3" stroke="#444" stroke-width="1.300"/></svg></span>
            <span class="ic-cell"><svg width="22" height="22" viewBox="0 0 22 22"><path d="M1 11h7M9 4h9v12H9l1-6z" fill="#eee" stroke="#555" stroke-width="1.200"/></svg></span>
            <span class="ic-cell"><svg width="22" height="22" viewBox="0 0 22 22"><path d="M20 1v20" stroke="#444" stroke-width="2"/><path d="M4 6h10M11 3l4 3-4 3z" stroke="#222" fill="#222"/><path d="M1 12h7M1 16h7" stroke="#777" stroke-width="1.500"/><rect x="9" y="11" width="9" height="6" fill="#5bb1ee"/></svg></span>
            <span class="ic-cell"><svg width="22" height="22" viewBox="0 0 22 22"><path d="M20 1v20" stroke="#444" stroke-width="2"/><path d="M6 4h8M12 1.500l3 2.500-3 2.500z" stroke="#222" fill="#222"/><path d="M1 9h7M1 13h7M1 17h7" stroke="#777" stroke-width="1.500"/><path d="M9 8h9v2H9zM9 12h9v2H9zM9 16h9v2H9z" fill="#5bb1ee"/></svg></span>
            <span class="ic-cell"><svg width="22" height="22" viewBox="0 0 22 22"><path d="M3 3l8 8M19 3l-8 8M3 19l8-8M19 19l-8-8" stroke="#a71f15" stroke-width="6.500" stroke-linecap="round"/><path d="M3 3l8 8M19 3l-8 8M3 19l8-8M19 19l-8-8" stroke="#e1443a" stroke-width="4.500" stroke-linecap="round"/></svg></span>
          </div>
        </div>
      </div>
      <div class="rb-label">Modificar</div>
    </section>

    <section class="rb-panel rb-view">
      <div class="rb-body">
        <div class="view-grid">
          <span></span>
          <span class="ic-cell"><svg width="22" height="26" viewBox="0 0 22 26"><circle cx="11" cy="9" r="8" fill="#f2f2f2" stroke="#cfcfcf" stroke-width="1.500"/><path d="M7 16h8v6H7z" fill="#dedede" stroke="#cfcfcf"/></svg></span>
          <span class="ic-cell"><i class="dd dd-soft"></i></span>
          <span class="ic-cell"><svg width="24" height="24" viewBox="0 0 24 24"><path d="M3 11l7-3 7 3v9l-7 3-7-3z" fill="#eee" stroke="#cfcfcf" stroke-width="1.400"/><path d="M13 4l5-3 4 3v8l-4 2" fill="#eee" stroke="#cfcfcf"/></svg></span>
          <span></span>
          <span class="ic-cell"><svg width="24" height="24" viewBox="0 0 24 24"><path d="M22 2l-8 10-3-2 9-10z" fill="#ddd" stroke="#ccc"/><path d="M11 10l3 2-2 6-9 4q6-5 8-12z" fill="#cfcfcf"/></svg></span>
          <span class="ic-cell"><i class="dd dd-soft"></i></span>
          <span class="ic-cell"><svg width="24" height="24" viewBox="0 0 24 24"><path d="M2 4h20" stroke="#333" stroke-width="2.500"/><path d="M2 9h20" stroke="#333" stroke-width="1.500"/><path d="M2 14h9" stroke="#888" stroke-dasharray="2 2"/><path d="M14 10h6v6h3l-6 7-6-7h3z" fill="#1f6fc5"/></svg></span>
          <span></span>
          <span class="ic-cell"><svg width="24" height="22" viewBox="0 0 24 22"><path d="M2 6l5-4 15 9-4 9L3 13z" fill="#eee" stroke="#ccc" stroke-width="1.400"/><path d="M2 6l16 8v6" fill="none" stroke="#ccc"/></svg></span>
          <span></span><span></span>
        </div>
      </div>
      <div class="rb-label">Vista</div>
    </section>

    <section class="rb-panel rb-meas">
      <div class="rb-body">
        <div class="meas-grid">
          <span></span>
          <span class="ic-cell"><svg width="38" height="34" viewBox="0 0 38 34"><path d="M1 9h36M1 9l5-4M1 9l5 4M37 9l-5-4M37 9l-5 4" stroke="#bdbdbd" stroke-width="1.500" fill="none"/><rect x="1" y="18" width="36" height="11" fill="#d8d8d8" stroke="#c6c6c6"/><path d="M5 18v5M10 18v5M15 18v5M20 18v5M25 18v5M30 18v5" stroke="#bbb"/></svg></span>
          <span class="ic-cell"><i class="dd ms-2 dd-soft"></i></span>
          <span></span>
          <span class="ic-cell"><svg width="40" height="40" viewBox="0 0 40 40"><path d="M1 37L24 2" stroke="#444" stroke-width="2"/><path d="M1 37h39" stroke="#444" stroke-width="2"/><path d="M24 5q9 14 9 29" fill="none" stroke="#444" stroke-width="1.500"/><path d="M22 8l5-2 1 6zM30 33h6l-3 5z" fill="#333"/></svg></span>
          <span class="ic-cell"><i class="dd ms-2"></i></span>
        </div>
      </div>
      <div class="rb-label">Medir</div>
    </section>

    <section class="rb-panel rb-make">
      <div class="rb-body">
        <div class="make-grid">
          <span></span>
          <span class="ic-cell"><svg width="40" height="40" viewBox="0 0 40 40"><path d="M5 1H1v38h4M35 1h4v38h-4" fill="none" stroke="#555" stroke-width="1.600"/><path d="M8 8l5-4h8v14H8z" fill="#a9d6f2" stroke="#2f7fc9" stroke-width="1.300"/><path d="M8 21h11v14H8zM21 21l5-4h6v14l-4 4h-7z" fill="#f1f2f3" stroke="#444" stroke-width="1.300"/></svg></span>
          <span class="ic-cell"><svg width="40" height="40" viewBox="0 0 40 40"><path d="M4 1H1v38h3M36 39h3V20" fill="none" stroke="#666" stroke-width="1.600"/><circle cx="15" cy="14" r="9" fill="#f4f4f4" stroke="#555" stroke-width="1.300"/><path d="M16 18l6-5h11v14l-5 5H16z" fill="#f1f2f3" stroke="#444" stroke-width="1.300"/><path d="M32 1l2 5 5-1-3 4 3 4-5-1-2 5-2-5-5 1 3-4-3-4 5 1z" fill="#f5a623" stroke="#d5392c"/></svg></span>
          <span></span>
          <span class="ic-cell"><svg width="42" height="44" viewBox="0 0 42 44"><path d="M8 2l32 11v24L8 26z" fill="#7fbef0" stroke="#2f7fc9"/><path d="M3 7l32 11v24L3 31z" fill="#eef1f3" stroke="#333" stroke-width="1.400"/><path d="M3 34l32 10" fill="none" stroke="#333" stroke-width="2"/></svg></span>
          <span class="ic-cell"><svg width="40" height="42" viewBox="0 0 40 42"><g fill="#ececec" stroke="#cfcfcf" stroke-width="1.400"><rect x="2" y="2" width="11" height="11"/><rect x="28" y="2" width="10" height="11"/><rect x="2" y="30" width="14" height="11"/><path d="M32 28l7 7-7 7-7-7z"/></g><g stroke="#bbb" stroke-width="1.400" fill="none"><path d="M15 8h11M7 15v12M18 18l8 8"/></g></svg></span>
        </div>
      </div>
      <div class="rb-label rb-label-make">Criar</div>
    </section>
  </div>

  <div class="gapfill"></div>

  <div class="workarea">
    <!-- painel esquerdo -->
    <aside class="ppanel">
      <div class="ptitle">Propriedades <svg width="13" height="13"><use href="#x-close"/></svg></div>
      <div class="ptype">
        <div class="pthumb"><svg width="40" height="40" viewBox="0 0 40 40"><path d="M2 3h22v26H2z" fill="#e3e6ea" stroke="#555" stroke-width="1.600"/><path d="M24 3h12v11" fill="none" stroke="#555" stroke-dasharray="2 1.500"/><path d="M14 14h23v24H14z" fill="#f4f5f6" stroke="#555" stroke-width="1.600"/><path d="M14 14v15h10V14" fill="none" stroke="#444" stroke-dasharray="2 1.500"/></svg></div>
        <div class="ptype-tx">Planta de piso</div>
        <i class="dd dd-lg"></i>
      </div>
      <div class="pselect-row">
        <select class="form-select"><option>Planta de piso: Nível 1</option></select>
        <div class="edit-type"><svg width="20" height="20"><use href="#edit-ty"/></svg> Editar tipo</div>
      </div>
      <div class="pgrid">
        <div class="ptable">
          <div class="pgroup">Gráficos <svg width="8" height="10"><use href="#dbl-up"/></svg></div>
          <div class="prow"><span class="pl">Escala da vista</span><span class="pv pv-input tx">1 : 100</span><span></span></div>
          <div class="prow off"><span class="pl">Valor de escala&nbsp;&nbsp;&nbsp;&nbsp;1:</span><span class="pv">100</span><span></span></div>
          <div class="prow"><span class="pl">Exibir modelo</span><span class="pv">Normal</span><span></span></div>
          <div class="prow"><span class="pl">Nível de detalhe</span><span class="pv">Baixo</span><span></span></div>
          <div class="prow"><span class="pl">Visibilidade de peças</span><span class="pv">Mostrar original</span><span></span></div>
          <div class="prow"><span class="pl">Visibilidade/Sobreposiç...</span><span class="pv"><b class="pv-btn">Editar...</b></span><span></span></div>
          <div class="prow"><span class="pl">Opções de exibição de ...</span><span class="pv"><b class="pv-btn">Editar...</b></span><span></span></div>
          <div class="prow"><span class="pl">Orientação</span><span class="pv">Norte do projeto</span><span></span></div>
          <div class="prow"><span class="pl">Exibição de união de p...</span><span class="pv">Limpar todas as uniões d...</span><span></span></div>
          <div class="prow"><span class="pl">Disciplina</span><span class="pv">Arquitetura</span><span></span></div>
          <div class="prow"><span class="pl">Mostrar linhas ocultas</span><span class="pv">Por disciplina</span><span></span></div>
          <div class="prow"><span class="pl">Localização do esquem...</span><span class="pv">Plano de fundo</span><span></span></div>
          <div class="prow"><span class="pl">Esquema de cor</span><span class="pv"><b class="pv-btn">&lt;nenhum&gt;</b></span><span></span></div>
          <div class="prow"><span class="pl">Esquemas de sistema d...</span><span class="pv"><b class="pv-btn">Editar...</b></span><span></span></div>
          <div class="prow"><span class="pl">Estilo de exibição de an...</span><span class="pv">Nenhum</span><span></span></div>
          <div class="prow"><span class="pl">Caminho do sol</span><span class="pv"><i class="ck"></i></span><span></span></div>
          <div class="pgroup">Subjacência <svg width="8" height="10"><use href="#dbl-up"/></svg></div>
          <div class="prow"><span class="pl">Faixa: Nível base</span><span class="pv">Nível 1</span><span></span></div>
          <div class="prow"><span class="pl">Faixa: Nível superior</span><span class="pv">Não delimitado</span><span></span></div>
          <div class="prow"><span class="pl">Orientação da subjacên...</span><span class="pv">Olhar para cima</span><span></span></div>
          <div class="pgroup">Extensões <svg width="8" height="10"><use href="#dbl-up"/></svg></div>
          <div class="prow"><span class="pl">Recortar vista</span><span class="pv"><i class="ck"></i></span><span></span></div>
          <div class="prow"><span class="pl">Região de recorte visível</span><span class="pv"><i class="ck"></i></span><span></span></div>
          <div class="prow"><span class="pl">Recorte de anotação</span><span class="pv"><i class="ck"></i></span><span></span></div>
          <div class="prow"><span class="pl"></span><span class="pv"><b class="pv-btn"></b></span><span></span></div>
        </div>
        <div class="pscroll">
          <div class="pscroll-track trk-main"></div>
          <svg width="12" height="12" class="chev-t"><use href="#chev-up"/></svg>
          <svg width="12" height="12" class="chev-b"><use href="#chev-dn"/></svg>
        </div>
      </div>
      <div class="pfoot">
        <a href="#">Ajuda de propriedades</a>
        <button class="btn" disabled>Aplicar</button>
      </div>
    </aside>

    <div class="vsplit"></div>

    <!-- vista 1 -->
    <div class="vpane vpane-a">
      <div class="vtabs">
        <div class="vtab">
          <svg width="20" height="20" viewBox="0 0 20 20"><path d="M2 3h11v15H2z" fill="#e8eaec" stroke="#555" stroke-width="1.200"/><path d="M7 8h11v11H7z" fill="#f4f5f6" stroke="#555" stroke-width="1.200" stroke-dasharray="2 1"/><path d="M13 3h5v5" fill="none" stroke="#555" stroke-dasharray="2 1"/></svg>
          Nível 1
          <svg width="13" height="13" class="vtab-close"><use href="#x-close"/></svg>
        </div>
        <svg class="vtabs-more" width="12" height="14"><use href="#more"/></svg>
      </div>
      <div class="vbody">
        <svg class="vcanvas" viewBox="402 243 570 732" height="732">
          <g fill="none" stroke="#a0a0a0">
            <rect x="465.500" y="399.500" width="419" height="318"/>
            <g stroke-width=".9">
              <path d="M465.500 399.500L617 551M884.500 399.500L733 551M624 558.500L465.500 717.500M726 558.500L884.500 717.500M617 554.500L624 558.500M733 554.500L726 558.500"/>
            </g>
            <rect x="513.500" y="551.500" width="251" height="3.500"/>
            <rect x="624.500" y="555" width="101" height="3.500"/>
            <rect x="513.500" y="581.500" width="45.500" height="3.500"/>
          </g>
        </svg>
        <div class="wheel">
          <svg width="30" height="113" viewBox="0 0 30 113">
            <circle cx="24" cy="6" r="3.500" fill="#d4d4d4"/><path d="M22 4l4 4M26 4l-4 4" stroke="#fff"/>
            <rect x="5" y="23" width="18" height="21" rx="6" fill="#fff" stroke="#b5b5b5"/><circle cx="14" cy="33" r="4.500" fill="#fff" stroke="#aaa"/>
            <text x="21" y="47" font-size="9" fill="#4b8fd0" text-anchor="middle" font-family="Liberation Sans">2D</text>
            <path d="M12 54h6l-3 3z" fill="#888"/><path d="M4 63h23" stroke="#ccc"/>
            <rect x="9" y="73" width="11" height="11" fill="#a6cf9c" stroke="#83ad7a"/><circle cx="20" cy="85" r="3.500" fill="#fff" stroke="#777"/><path d="M22 88l3 3" stroke="#777" stroke-width="1.400"/>
            <path d="M12 100h6l-3 3z" fill="#888"/>
            <circle cx="24" cy="108" r="3.500" fill="#d4d4d4"/><path d="M22 108h4" stroke="#fff"/>
          </svg>
        </div>
        <div class="vscroll"><i></i>
          <svg width="12" height="12" class="chev-t"><use href="#chev-up"/></svg>
          <svg width="12" height="12" class="chev-b"><use href="#chev-dn"/></svg>
        </div>
      </div>
      <div class="vbar">
        <span class="vbar-scale">1 : 100</span>
        <div class="vbar-icons">
          <svg width="20" height="20"><use href="#v-rect"/></svg>
          <svg width="20" height="20"><use href="#v-cube"/></svg>
          <svg width="20" height="20"><use href="#v-sun"/></svg>
          <svg width="20" height="20"><use href="#v-look"/></svg>
          <svg width="20" height="20"><use href="#v-crop"/></svg>
          <svg width="20" height="20"><use href="#v-cropl"/></svg>
          <svg width="20" height="20"><use href="#v-glass"/></svg>
          <svg width="20" height="20"><use href="#v-bulb"/></svg>
          <svg width="20" height="20"><use href="#v-cam"/></svg>
          <svg width="20" height="20"><use href="#v-lock"/></svg>
        </div>
        <div class="vbar-track"><i></i>
          <svg width="12" height="12" class="trk-l" viewBox="0 0 12 12"><path d="M8 2L4 6l4 4" fill="none" stroke="#444" stroke-width="1.500"/></svg>
          <svg width="12" height="12" class="trk-r" viewBox="0 0 12 12"><path d="M4 2l4 4-4 4" fill="none" stroke="#444" stroke-width="1.500"/></svg>
        </div>
        <svg width="12" height="12" viewBox="0 0 12 12" class="me-2"><path d="M10 2v2M6 6v2M10 6v2M2 10v2M6 10v2M10 10v2" stroke="#bbb" stroke-width="2"/></svg>
      </div>
      <div class="vbar-line"></div>
    </div>

    <div class="vsplit vsplit-b"></div>

    <!-- vista 3D -->
    <div class="vpane vpane-b">
      <div class="vtabs">
        <div class="vtab vtab-off">
          <svg width="20" height="20"><use href="#q-house"/></svg>
          {3D}
        </div>
      </div>
      <div class="vbody">
        <svg class="vcanvas" viewBox="998 243 570 732" height="732">
          <path d="M1160 519l14 1v35l-14 2zM1208.300 524l137.200-8.300v28.600l-137.200 9z" fill="#22b14c"/>
          <path d="M1174 520l34.300 4v77l-34.300 2.300z" fill="#fff"/>
          <g fill="none" stroke="#000" stroke-width="1">
            <path d="M1041.800 495.700L1243.900 415.300L1321.800 411L1519.500 496.700" stroke-width=".9"/>
            <path d="M1243.900 415.300L1208.800 516.700" stroke-width=".9"/>
            <path d="M1041.800 497.300L1208.300 516.700L1519.500 496.700V504.300L1208.300 524L1041.800 503.300"/>
            <path d="M1208.300 516.700V601L1174 603.300V520M1158.500 518V557M1160.500 518V557L1174 555" stroke-width="1.200"/>
            <path d="M1174 520L1158 518"/>
            <path d="M1345.500 516v28.300"/>
            <path d="M1208.300 553.300L1345.500 544.300"/>
            <path d="M1174 520L1208.300 524" stroke-width="1.400"/>
          </g>
          <g fill="none" stroke="#000" stroke-width="1" stroke-dasharray="14 5 6 5">
            <path d="M1047 564.300L1161 556.700"/>
            <path d="M1345.500 544.300L1395 542.300L1569 566"/>
            <path d="M1047 624.300L1375 602.700"/>
            <path d="M1519.500 498L1569 506"/>
          </g>
          <path d="M1034 505h11M1034 566h11M1034 626h11" stroke="#000"/>
          <ellipse cx="1029" cy="505" rx="5" ry="6.500" fill="#fff" stroke="#000"/><path d="M1029 498.500a5 6.500 0 0 1 5 6.500h-5zM1029 505h-5a5 6.500 0 0 0 5 6.500z" fill="#000"/>
          <ellipse cx="1029" cy="566" rx="5" ry="6.500" fill="#fff" stroke="#0a3fc0"/><path d="M1029 559.500a5 6.500 0 0 1 5 6.500h-5zM1029 566h-5a5 6.500 0 0 0 5 6.500z" fill="#0a3fc0"/>
          <ellipse cx="1029" cy="626" rx="5" ry="6.500" fill="#fff" stroke="#0a3fc0"/><path d="M1029 619.500a5 6.500 0 0 1 5 6.500h-5zM1029 626h-5a5 6.500 0 0 0 5 6.500z" fill="#0a3fc0"/>
          <g font-size="5.500" fill="#666" font-family="Liberation Sans">
            <text x="1039" y="501">Nível 3</text><text x="1039" y="511">8,00</text>
            <text x="1039" y="561">Nível 2</text><text x="1039" y="572">4,00</text>
            <text x="1039" y="622">Nível 1</text><text x="1039" y="632">0,00</text>
          </g>
        </svg>
        <div class="wheel wheel-b">
          <i class="dd dd-faint"></i>
          <svg width="9" height="9" viewBox="0 0 9 9" class="align-self-end me-1"><circle cx="4.500" cy="4.500" r="3.500" fill="#d4d4d4" stroke="#aaa"/><path d="M2.500 4.500h4" stroke="#666"/></svg>
        </div>
        <div class="vscroll vscroll-wide"><i></i></div>
      </div>
      <div class="vbar">
        <span class="vbar-scale">1 : 100</span>
        <div class="vbar-icons">
          <svg width="20" height="20"><use href="#v-chk"/></svg>
          <svg width="20" height="20"><use href="#v-cube"/></svg>
          <svg width="20" height="20"><use href="#v-sun"/></svg>
          <svg width="20" height="20"><use href="#v-look"/></svg>
          <svg width="20" height="20"><use href="#v-teapot"/></svg>
          <svg width="20" height="20"><use href="#v-crop"/></svg>
          <svg width="20" height="20"><use href="#v-cropl"/></svg>
          <svg width="20" height="20"><use href="#v-hood"/></svg>
          <svg width="20" height="20"><use href="#v-glass"/></svg>
          <svg width="20" height="20"><use href="#v-bulb"/></svg>
          <svg width="20" height="20"><use href="#v-cam"/></svg>
          <svg width="20" height="20"><use href="#v-cube"/></svg>
        </div>
      </div>
      <div class="vbar-line"></div>
    </div>
  </div>

  <!-- painel flutuante: nivel 2 -->
  <div class="float-props float-purple">
    <div class="ppanel">
      <div class="ptitle">Propriedades <svg width="13" height="13"><use href="#x-close"/></svg></div>
      <div class="ptype">
        <div class="pthumb pthumb-wall"></div>
        <div class="ptype-tx">Parede básica<span>Genérico - 200 mm</span></div>
        <i class="dd dd-lg"></i>
      </div>
      <div class="pselect-row">
        <select class="form-select"><option>Paredes (1)</option></select>
        <div class="edit-type"><svg width="20" height="20"><use href="#edit-ty"/></svg> Editar tipo</div>
      </div>
      <div class="pgrid">
        <div class="ptable">
          <div class="pgroup">Restrições <svg width="8" height="10"><use href="#dbl-up"/></svg></div>
          <div class="prow"><span class="pl">Linha de localização</span><span class="pv pv-input">Linha central da parede</span><span></span></div>
          <div class="prow"><span class="pl">Restrição da base</span><span class="pv">Nível 2</span><span></span></div>
          <div class="prow"><span class="pl">Deslocamento da base</span><span class="pv">1,0000</span><span></span></div>
          <div class="prow off"><span class="pl">A base está anexada</span><span class="pv"><i class="ck"></i></span><span></span></div>
          <div class="prow off"><span class="pl">Distância da extensão d...</span><span class="pv">0,0000</span><span></span></div>
        </div>
        <i class="minithumb mini-p"></i>
        <div class="pscroll">
          <div class="pscroll-track trk-p"></div>
          <svg width="12" height="12" class="chev-t"><use href="#chev-up"/></svg>
        </div>
      </div>
    </div>
  </div>

  <!-- painel flutuante: nivel 1 -->
  <div class="float-props float-black">
    <div class="ppanel">
      <div class="ptitle">Propriedades <svg width="13" height="13"><use href="#x-close"/></svg></div>
      <div class="ptype">
        <div class="pthumb pthumb-wall"></div>
        <div class="ptype-tx">Parede básica<span>Genérico - 200 mm</span></div>
        <i class="dd dd-lg"></i>
      </div>
      <div class="pselect-row">
        <select class="form-select"><option>Paredes (1)</option></select>
        <div class="edit-type"><svg width="20" height="20"><use href="#edit-ty"/></svg> Editar tipo</div>
      </div>
      <div class="pgrid">
        <div class="ptable">
          <div class="pgroup">Restrições <svg width="8" height="10"><use href="#dbl-up"/></svg></div>
          <div class="prow"><span class="pl">Linha de localização</span><span class="pv pv-input">Linha central da parede</span><span></span></div>
          <div class="prow"><span class="pl">Restrição da base</span><span class="pv">Nível 1</span><span></span></div>
          <div class="prow"><span class="pl">Deslocamento da base</span><span class="pv">2,0000</span><span></span></div>
          <div class="prow off"><span class="pl">A base está anexada</span><span class="pv"><i class="ck"></i></span><span></span></div>
          <div class="prow off"><span class="pl">Distância da extensão d...</span><span class="pv">0,0000</span><span></span></div>
          <div class="prow"><span class="pl">Restrição superior</span><span class="pv">Não conectado</span><span></span></div>
          <div class="prow"><span class="pl">Altura desconectada</span><span class="pv">8,0000</span><span></span></div>
          <div class="prow off"><span class="pl">Deslocamento superior</span><span class="pv">0,0000</span><span></span></div>
          <div class="prow off"><span class="pl">O topo está anexado</span><span class="pv"><i class="ck"></i></span><span></span></div>
        </div>
        <i class="minithumb mini-b"></i>
        <div class="pscroll">
          <div class="pscroll-track trk-b"></div>
          <svg width="12" height="12" class="chev-t"><use href="#chev-up"/></svg>
        </div>
      </div>
    </div>
  </div>

  <!-- marca-texto amarelo -->
  <svg class="hl-layer" viewBox="0 0 1822 998">
    <path fill="#ffff00" d="M3 773H107L117 784L157 783L213 791L243 797L245 815L290 820L295 838V863H3Z"/>
    <path fill="#ffff00" d="M1563 792H1577L1603 787L1623 788L1626 825L1623 828V848L1570 850H1554V825L1557 822L1563 802Z"/>
  </svg>

  <!-- setas e quadro vermelho -->
  <svg class="overlay" viewBox="0 0 1822 998">
    <path d="M701 551L1420 261M1245 536L1420 262" stroke="#a349a4" stroke-width="5" fill="none" stroke-linecap="round"/>
    <path d="M561.500 582.300L1385 675M1197 589L1385 672" stroke="#000" stroke-width="5" fill="none" stroke-linecap="round"/>
    <rect x="1" y="770" width="360" height="95" fill="none" stroke="#ed1c24" stroke-width="4.500"/>
  </svg>

  <p class="note note-red">Ativa a subjacencia da vista para ver<br>os elementos a cima do plano de<br>corte</p>
  <p class="note note-purple">Parede no nível 2 om<br>sua restrição da base a<br>1m</p>
  <p class="note note-black">Parede no nível 1 com sua<br>restrição da base a 2m</p>
</div>
<script src="https://cdn.jsdelivr.net/npm/bootstrap@5.3.0/dist/js/bootstrap.bundle.min.js"></script>
</body>
</html>
